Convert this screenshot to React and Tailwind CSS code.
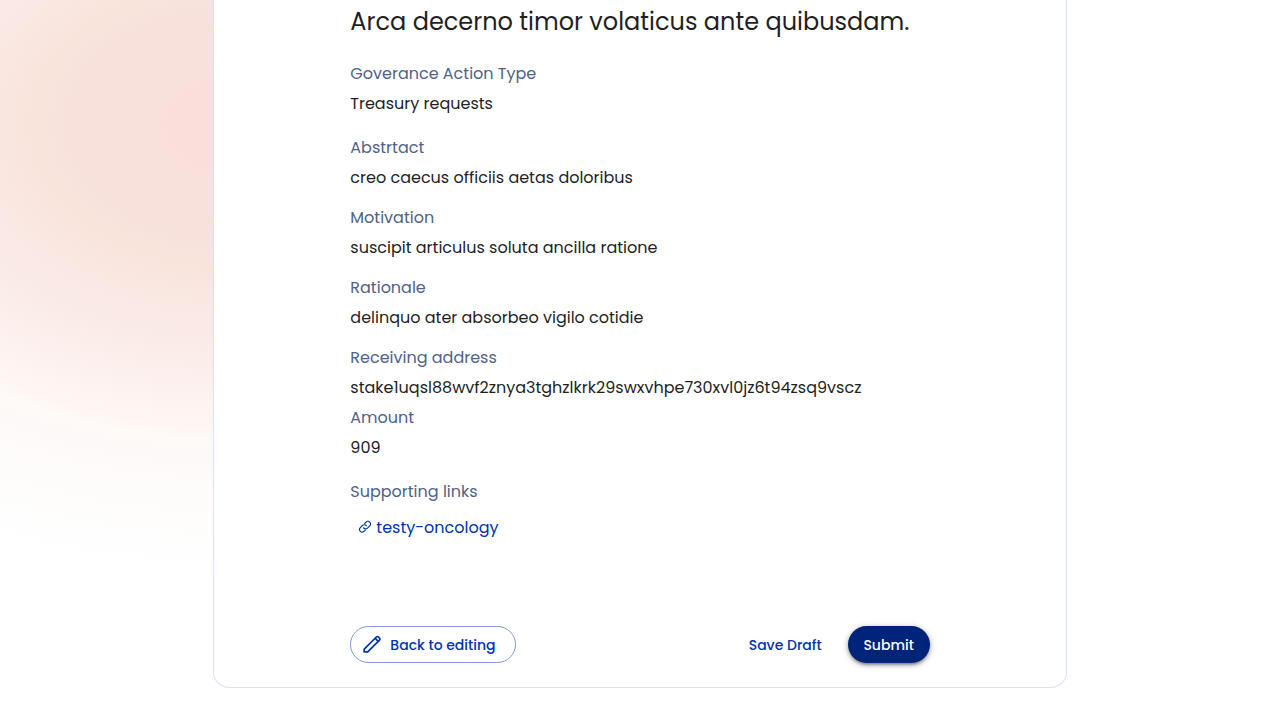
function LinkIcon() {
  return (
    <svg className="size-4 shrink-0" viewBox="0 0 16 16" fill="none" stroke="currentColor" strokeWidth="1.1" strokeLinecap="round" strokeLinejoin="round" aria-hidden="true">
      <path d="M6.6 7.8a2.6 2.6 0 0 0 3.9.3l2.2-2.2A2.6 2.6 0 0 0 9 2.2L7.7 3.5" />
      <path d="M9.4 5.8a2.6 2.6 0 0 0-3.9-.3L3.3 7.7A2.6 2.6 0 0 0 7 11.4l1.3-1.3" />
    </svg>
  );
}

function PencilIcon() {
  return (
    <svg className="size-5 shrink-0" viewBox="0 0 20 20" fill="none" stroke="currentColor" strokeWidth="1.7" strokeLinejoin="round" strokeLinecap="round" aria-hidden="true">
      <path d="M14.4 2a1.4 1.4 0 0 1 2 0l1.1 1.1a1.4 1.4 0 0 1 0 2L5.7 16.9H2.2v-2.7L14.4 2Z" />
      <path d="m13.2 3.3 3 3" />
    </svg>
  );
}

function Field({ label, children }) {
  return (
    <div className="flex flex-col gap-1.5">
      <dt className="text-[#506288]">{label}</dt>
      <dd className="break-words">{children}</dd>
    </div>
  );
}

export default function App() {
  return (
    <main className="min-h-screen bg-white bg-[radial-gradient(630px_450px_at_230px_125px,#fbdeda_0%,#fbdeda_10%,#f8e1db_13%,#f8e1db_20%,#f8e0dc_24%,#f9e4dc_31%,#fae7e0_38%,#fae8e5_41%,#faebe7_49%,#fcf0ed_57%,#fff5f3_66%,#fefaf6_70%,#fdf9f8_74%,#fefbfa_80%,#fefdfc_88%,#ffffff_100%)] bg-no-repeat pb-8 font-[Poppins,Inter,sans-serif] text-base leading-6 text-[#1f1f1f]">
      <section className="mx-auto w-2/3 rounded-b-2xl border border-t-0 border-[#d6e2ff] bg-white px-34 pt-1.5 pb-6">
        <h1 className="text-2xl leading-8">Arca decerno timor volaticus ante quibusdam.</h1>
        <dl className="mt-6 flex flex-col gap-5">
          <Field label="Goverance Action Type">Treasury requests</Field>
          <div className="flex flex-col gap-4">
            <Field label="Abstrtact">creo caecus officiis aetas doloribus</Field>
            <Field label="Motivation">suscipit articulus soluta ancilla ratione</Field>
            <Field label="Rationale">delinquo ater absorbeo vigilo cotidie</Field>
            <div className="flex flex-col gap-1.5">
              <Field label="Receiving address">stake1uqsl88wvf2znya3tghzlkrk29swxvhpe730xvl0jz6t94zsq9vscz</Field>
              <Field label="Amount">909</Field>
            </div>
          </div>
          <div className="flex flex-col gap-3">
            <dt className="text-[#506288]">Supporting links</dt>
            <dd className="flex pl-[7px]">
              <a href="#testy-oncology" className="flex items-center gap-[3px] text-[#0033ad]">
                <LinkIcon />
                testy-oncology
              </a>
            </dd>
          </div>
        </dl>
        <div className="mt-[86px] flex items-center justify-between text-sm font-medium">
          <button type="button" className="flex h-[37px] w-[166px] items-center gap-2 rounded-full border border-[#8099d6] pl-[11px] whitespace-nowrap text-[#0033ad]">
            <PencilIcon />
            Back to editing
          </button>
          <div className="flex gap-2">
            <button type="button" className="h-[37px] w-[109px] rounded-full whitespace-nowrap text-[#0033ad]">Save Draft</button>
            <button type="button" className="h-[37px] w-[82px] rounded-full bg-[#00247a] text-white shadow-[0_3px_3px_-2px_rgba(0,0,0,0.3),0_2px_4px_rgba(0,0,0,0.3),0_1px_8px_rgba(0,0,0,0.15)]">Submit</button>
          </div>
        </div>
      </section>
    </main>
  );
}
